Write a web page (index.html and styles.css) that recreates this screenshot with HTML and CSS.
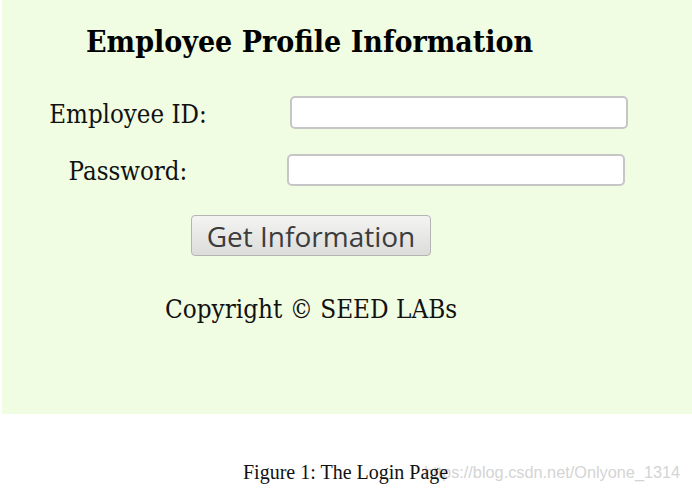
FILE: index.html
```html
<!DOCTYPE html>
<html>
<head>
<meta charset="utf-8">
<link rel="stylesheet" href="styles.css">
</head>
<body>
<div class="panel">
  <h2 class="title">Employee Profile Information</h2>
  <form class="form">
    <label class="label">Employee ID:</label>
    <input class="field" type="text">
    <label class="label">Password:</label>
    <input class="field field-shift" type="password">
  </form>
  <button class="btn" type="button">Get Information</button>
  <p class="copy">Copyright &copy; SEED LABs</p>
</div>
<div class="caption">
  <span class="caption-text">Figure 1: The Login Page</span>
  <span class="watermark">https://blog.csdn.net/Onlyone_1314</span>
</div>
</body>
</html>
```
FILE: styles.css
```css
html, body {
  margin: 0;
  padding: 0;
  background: #ffffff;
}
body {
  width: 692px;
  height: 490px;
  overflow: hidden;
}
.panel {
  margin-left: 2px;
  height: 414px;
  background: #f1fde3;
  box-sizing: border-box;
  padding-top: 25px;
  font-family: "DejaVu Serif", serif;
  font-stretch: condensed;
  color: #111;
}
.title {
  margin: 0 0 0 84px;
  font-size: 30px;
  font-weight: bold;
  line-height: 34px;
  color: #000;
}
.form {
  display: grid;
  grid-template-columns: 240px 338px;
  column-gap: 42px;
  row-gap: 24px;
  margin: 37px 0 0 6px;
  align-items: center;
}
.label {
  text-align: center;
  font-size: 25.6px;
  line-height: 29px;
  padding-top: 4px;
}
.field {
  box-sizing: border-box;
  height: 33px;
  width: 338px;
  border: 2px solid #c6c6c6;
  border-radius: 5px;
  background: #fff;
  margin: 0;
  padding: 0;
}
.field-shift {
  margin-left: -3px;
  height: 32px;
}
.btn {
  display: block;
  box-sizing: border-box;
  margin: 29px 0 0 189px;
  width: 240px;
  height: 41px;
  border: 1px solid #b4b4b4;
  border-radius: 4px;
  background: linear-gradient(#f4f4f2, #dcdcda);
  font-family: "Open Sans", sans-serif;
  font-size: 28px;
  color: #3c3c3c;
  padding: 0;
  line-height: 38px;
}
.copy {
  margin: 38px 0 0 163px;
  font-size: 25.8px;
  line-height: 30px;
}
.caption {
  position: relative;
  padding: 46px 0 0 243px;
  font-family: "Liberation Serif", serif;
  font-size: 20px;
  line-height: 24px;
  color: #111;
}
.caption-text {
  position: relative;
  z-index: 2;
}
.watermark {
  position: absolute;
  left: 424px;
  top: 48px;
  z-index: 1;
  font-family: "Liberation Sans", sans-serif;
  font-size: 16.3px;
  line-height: 20px;
  color: #d4d4d4;
  white-space: nowrap;
}
```
